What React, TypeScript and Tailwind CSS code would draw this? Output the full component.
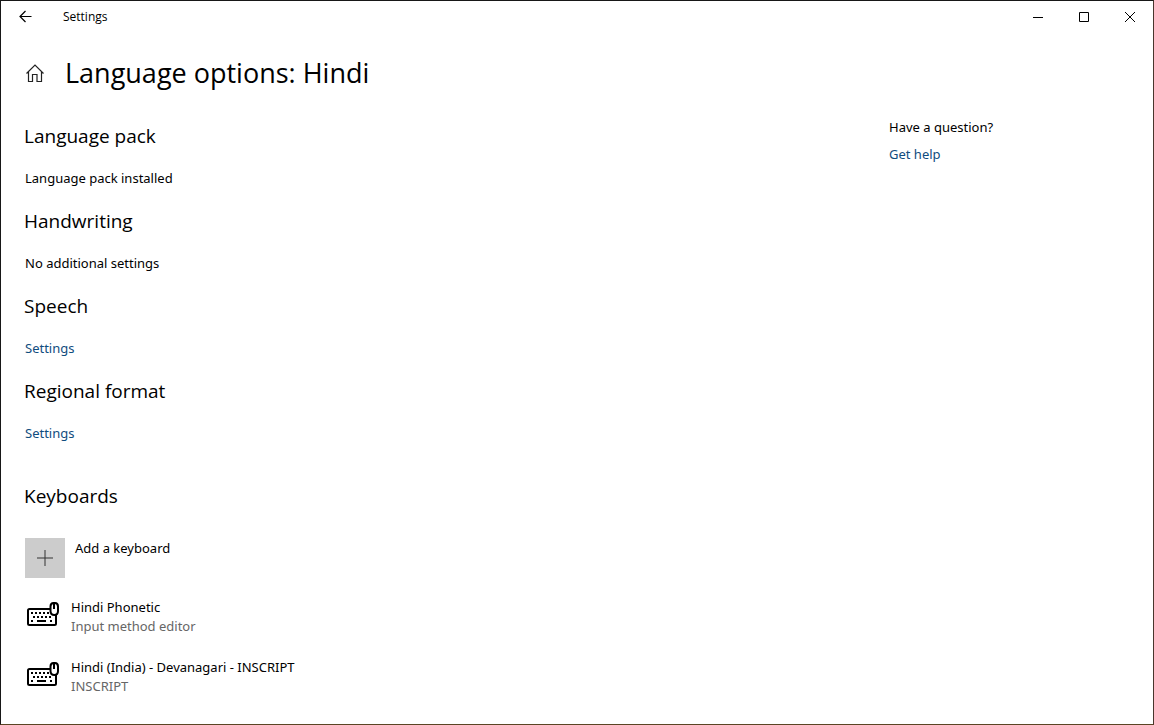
import type { ReactNode } from 'react';

function KeyboardIcon() {
  return (
    <svg width="32" height="24" viewBox="0 0 32 24" fill="none" stroke="black" className="mt-1 shrink-0" aria-hidden="true">
      <path d="M23 7H2.500Q1 7 1 8.500v13Q1 23 2.500 23h25q1.500 0 1.500-1.500V13" strokeWidth="2" />
      <path d="M23.500 4.500q0-3.500 3-3.500h1.500q3 0 3 3.500v4.500q0 4-3.750 4t-3.750-4z" strokeWidth="2" />
      <path d="M27 1v6" strokeWidth="2" />
      <path d="M4 11h18M6 15h20M4 19h3M23 19h3" strokeWidth="2" strokeDasharray="2 2" />
      <path d="M10 19h9" strokeWidth="2" />
    </svg>
  );
}

function Section({ title, children }: { title: string; children: ReactNode }) {
  return (
    <section className="mb-[17px]">
      <h2 className="-ml-px font-['Open_Sans',sans-serif] text-[19px] leading-7">{title}</h2>
      <div className="mt-4 leading-6">{children}</div>
    </section>
  );
}

const keyboards = [
  { name: 'Hindi Phonetic', kind: 'Input method editor' },
  { name: 'Hindi (India) - Devanagari - INSCRIPT', kind: 'INSCRIPT' },
];

export default function App() {
  return (
    <div className="min-h-screen border border-t-[#171717] border-r-[#49362d] border-b-[#5a4524] border-l-[#171717] bg-white font-['Noto_Sans',sans-serif] text-[13px] leading-5 text-black">
      <header className="flex h-8 items-center justify-between">
        <div className="flex items-center gap-[30px] pl-4 font-['Open_Sans',sans-serif] text-[12px]">
          <button aria-label="Back">
            <svg width="16" height="16" viewBox="0 0 16 16" fill="none" stroke="black" strokeWidth="1.2">
              <path d="M14.500 7.500H3M8.500 2l-5.500 5.500 5.500 5.500" />
            </svg>
          </button>
          <span>Settings</span>
        </div>
        <div className="flex">
          <button aria-label="Minimize" className="flex w-[46px] justify-center">
            <svg width="11" height="11" fill="none" stroke="black"><path d="M0 5.500h10" /></svg>
          </button>
          <button aria-label="Maximize" className="flex w-[46px] justify-center">
            <svg width="11" height="11" fill="none" stroke="black"><path d="M.5.5h9v9h-9z" /></svg>
          </button>
          <button aria-label="Close" className="flex w-[46px] justify-center">
            <svg width="11" height="11" fill="none" stroke="black"><path d="m0 0 10 10m0-10-10 10" /></svg>
          </button>
        </div>
      </header>

      <div className="mt-5 flex items-center gap-5 px-6">
        <button aria-label="Home">
          <svg width="20" height="20" viewBox="0 0 20 20" fill="none" stroke="#222" strokeWidth="1.2">
            <path d="m1.500 10.500 8.500-8.500 8.500 8.500M3.500 9v9.500h4v-7h4.500v7h4.500V9" />
          </svg>
        </button>
        <h1 className="font-['Open_Sans',sans-serif] text-[27px] leading-10">Language options: Hindi</h1>
      </div>

      <div className="mt-[29px] flex justify-between px-6">
        <main>
          <Section title="Language pack">Language pack installed</Section>
          <Section title="Handwriting">No additional settings</Section>
          <Section title="Speech">
            <a href="#speech" className="text-[#104c7e]">Settings</a>
          </Section>
          <Section title="Regional format">
            <a href="#region" className="text-[#104c7e]">Settings</a>
          </Section>
          <section className="pt-5">
            <h2 className="-ml-px font-['Open_Sans',sans-serif] text-[19px] leading-7">Keyboards</h2>
            <button className="mt-7 flex gap-2.5 text-left">
              <span className="flex size-10 items-center justify-center bg-[#ccc]">
                <svg width="16" height="16" stroke="#333"><path d="M8 0v16M0 8h16" /></svg>
              </span>
              <span>Add a keyboard</span>
            </button>
            <ul>
              {keyboards.map((k) => (
                <li key={k.name} className="mt-5 flex h-10 gap-3 pl-0.5">
                  <KeyboardIcon />
                  <div className="leading-[19px]">
                    <p>{k.name}</p>
                    <p className="text-[#666]">{k.kind}</p>
                  </div>
                </li>
              ))}
            </ul>
          </section>
        </main>
        <aside className="-mt-[5px] w-60">
          <p>Have a question?</p>
          <a href="#help" className="mt-[7px] block text-[#104c7e]">Get help</a>
        </aside>
      </div>
    </div>
  );
}
